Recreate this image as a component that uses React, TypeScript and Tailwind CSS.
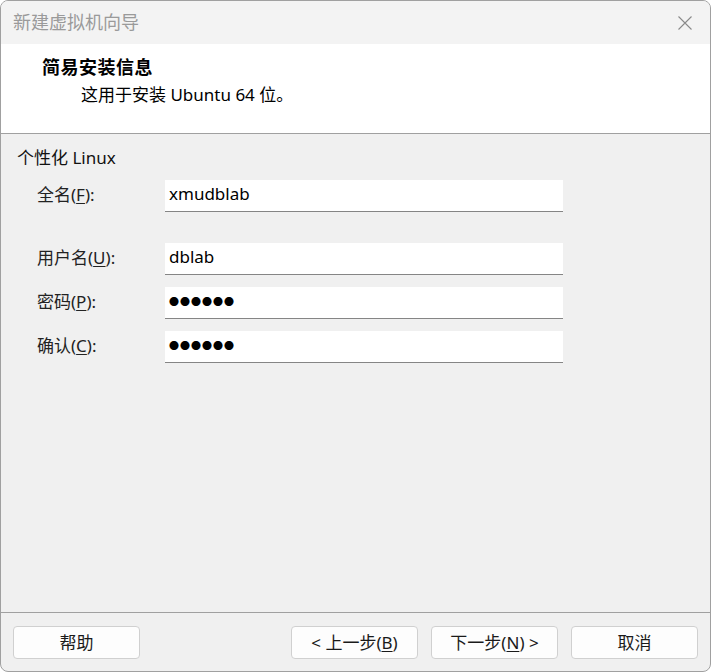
import React from "react";

const font = { fontFamily: "'Noto Sans', 'Noto Sans CJK SC', sans-serif" };

function Field({ label, k, value, pw }: { label: string; k: string; value: string; pw?: boolean }) {
  return (
    <div className="flex items-center h-[32px]">
      <div className="w-[164px] pl-[36px] pb-[3px] text-[17px] text-[#222] leading-none">
        {label}(<span className="underline underline-offset-2">{k}</span>):
      </div>
      <div
        className={
          pw
            ? "w-[398px] h-[32px] bg-white border-b border-[#858585] flex items-center pl-[4px] pb-[1px] text-[10px] tracking-[1px] text-black"
            : "w-[398px] h-[32px] bg-white border-b border-[#858585] flex items-center pl-[4px] pb-[3px] text-[17px] text-black"
        }
      >
        {value}
      </div>
    </div>
  );
}

function Btn({ children }: { children: React.ReactNode }) {
  return (
    <div className="w-[127px] h-[33px] rounded-[4px] border border-[#d0d0d0] bg-[#fdfdfd] flex items-center justify-center text-[17px] text-[#1a1a1a]">
      {children}
    </div>
  );
}

export default function App() {
  return (
    <div className="w-[712px] h-[672px] bg-white" style={font}>
      <div className="w-[711px] h-[672px] flex flex-col rounded-[8px] border border-[#a0a0a0] overflow-hidden bg-[#f0f0f0]">
        <div className="h-[43px] bg-[#f3f3f3] flex items-center justify-between pl-[12px] pr-[16px]">
          <span className="text-[18px] text-[#9a9a9a]">新建虚拟机向导</span>
          <svg width="16" height="16" viewBox="0 0 16 16" className="mr-[1px]">
            <path d="M1.5 1.5 L14.5 14.5 M14.5 1.5 L1.5 14.5" stroke="#8a8a8a" strokeWidth="1.1" fill="none" />
          </svg>
        </div>
        <div className="h-[90px] bg-white border-b border-[#a0a0a0] flex flex-col pt-[12px]">
          <div className="pl-[41px] text-[18px] font-bold text-black leading-[22px] tracking-[0.5px]">简易安装信息</div>
          <div className="pl-[80px] mt-[6px] text-[17px] text-black leading-[22px]">这用于安装 Ubuntu 64 位。</div>
        </div>
        <div className="flex-1 flex flex-col pt-[13px]">
          <div className="pl-[16px] text-[17px] text-[#111] leading-[22px]">个性化 Linux</div>
          <div className="flex flex-col mt-[11px]">
            <Field label="全名" k="F" value="xmudblab" />
            <div className="h-[31px]" />
            <div className="flex flex-col gap-[12px]">
              <Field label="用户名" k="U" value="dblab" />
              <Field label="密码" k="P" value="●●●●●●" pw />
              <Field label="确认" k="C" value="●●●●●●" pw />
            </div>
          </div>
        </div>
        <div className="h-[59px] border-t border-[#a0a0a0] flex items-start pt-[13px] px-[12px]">
          <Btn>帮助</Btn>
          <div className="flex-1" />
          <div className="flex gap-[13px]">
            <Btn>
              &lt; 上一步(<span className="underline underline-offset-2">B</span>)
            </Btn>
            <Btn>
              下一步(<span className="underline underline-offset-2">N</span>) &gt;
            </Btn>
            <Btn>取消</Btn>
          </div>
        </div>
      </div>
    </div>
  );
}
